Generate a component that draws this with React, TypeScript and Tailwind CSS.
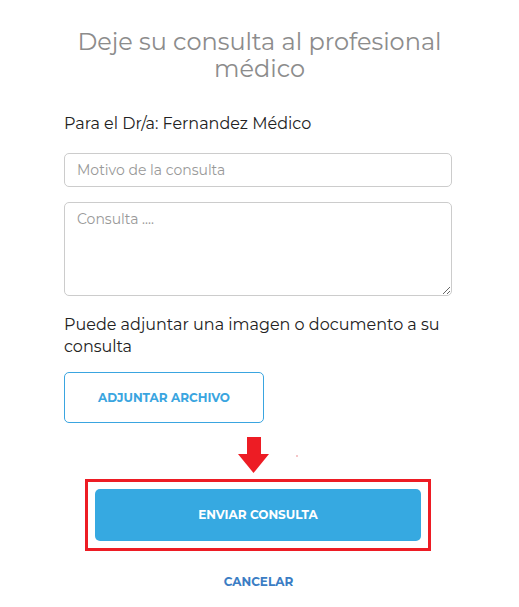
export default function App() {
  const font = { fontFamily: '"Montserrat", "Lato", "Noto Sans", sans-serif' };
  return (
    <div className="w-[519px] h-[607px] bg-white relative" style={font}>
      <div className="pt-[28px] px-[64px] w-[519px]">
        <h1 className="text-center text-[24px] leading-[27px] text-[#8c8c8c] font-normal">
          Deje su consulta al profesional médico
        </h1>
        <p className="mt-[32px] text-[16px] leading-[20px] text-[#222]">Para el Dr/a: Fernandez Médico</p>
        <input
          className="mt-[19px] block w-[388px] h-[34px] border border-[#cccccc] rounded-[5px] px-[12px] text-[14px] text-[#555] placeholder:text-[#999] outline-none"
          placeholder="Motivo de la consulta"
        />
        <textarea
          className="mt-[15px] block w-[388px] h-[94px] border border-[#cccccc] rounded-[5px] px-[12px] py-[6px] text-[14px] text-[#555] placeholder:text-[#999] outline-none"
          placeholder="Consulta ...."
        />
        <p className="mt-[18px] text-[16px] leading-[22px] text-[#222]">
          Puede adjuntar una imagen o documento a su consulta
        </p>
        <button className="mt-[14px] w-[200px] h-[51px] border border-[#3aa5e0] rounded-[5px] text-[12px] font-bold text-[#3aa5e0] bg-white">
          ADJUNTAR ARCHIVO
        </button>
        <div className="flex justify-center mt-[14px] h-[37px] relative">
          <svg width="31" height="37" viewBox="0 0 31 37" className="ml-[-12px]">
            <rect x="9" y="0" width="14" height="18" fill="#ed1c24" />
            <polygon points="0,17 31,17 15.5,36" fill="#ed1c24" />
          </svg>
          <div className="absolute left-[232px] top-[18px] w-[2px] h-[2px] bg-[#f5c6c8]" />
        </div>
        <div className="mt-[5px] ml-[21px] w-[346px] h-[72px] border-[3px] border-[#ed1c24] p-[7px] flex">
          <button className="flex-1 h-[52px] rounded-[5px] bg-[#36a9e1] text-white text-[12px] font-bold">
            ENVIAR CONSULTA
          </button>
        </div>
        <div className="mt-[22px] text-center text-[12px] font-bold text-[#3b7dc4] pr-[2px]">CANCELAR</div>
      </div>
    </div>
  );
}
